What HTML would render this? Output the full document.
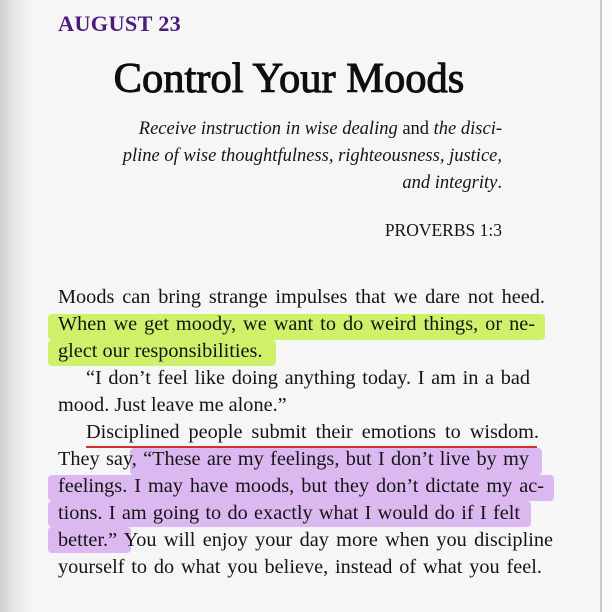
<!DOCTYPE html>
<html><head><meta charset="utf-8"><style>
html,body{margin:0;padding:0}
body{width:612px;height:612px;position:relative;overflow:hidden;background:#f6f6f6;font-family:"Liberation Serif",serif;color:#141414}
.shadow{position:absolute;left:0;top:0;width:34px;height:612px;background:linear-gradient(to right,#cfcfcf,#e6e6e6 40%,#f6f6f6)}
.redge{position:absolute;left:600px;top:0;width:2px;height:612px;background:#c8c8c8}
.rw{position:absolute;left:602px;top:0;width:10px;height:612px;background:#fbfbfb}
.a{position:absolute;white-space:nowrap}
.l{position:absolute;font-size:20.3px;line-height:27px;white-space:nowrap;height:27px}
.j{text-align:justify;text-align-last:justify}
.hl{position:absolute;border-radius:4px}
.g{background:#cff16a}
.p{background:#dcb8f0}
.ep{position:absolute;right:110px;font-style:italic;font-size:18.5px;text-align:right;white-space:nowrap}
</style></head><body>
<div class="shadow"></div><div class="redge"></div><div class="rw"></div>
<div class="a" style="left:58px;top:11px;font-size:22.3px;font-weight:bold;color:#4b1c7c;letter-spacing:0.3px">AUGUST 23</div>
<div class="a" style="left:0;width:578px;text-align:center;top:54px;font-size:42.5px;-webkit-text-stroke:1px #0e0e0e;color:#0e0e0e">Control Your Moods</div>
<div class="ep" style="top:119px">Receive instruction in wise dealing <span style="font-style:normal">and</span> the disci-</div>
<div class="ep" style="top:146px">pline of wise thoughtfulness, righteousness, justice,</div>
<div class="ep" style="top:173px">and integrity<span style="font-style:normal">.</span></div>
<div class="a" style="right:110px;top:220px;font-size:17.5px">PROVERBS 1:3</div>

<div class="hl g" style="left:48px;top:314px;width:497px;height:26px"></div>
<div class="hl g" style="left:48px;top:340px;width:228px;height:26px"></div>
<div class="hl p" style="left:130px;top:448px;width:412px;height:27px"></div>
<div class="hl p" style="left:48px;top:475px;width:506px;height:26px"></div>
<div class="hl p" style="left:48px;top:501px;width:483px;height:26px"></div>
<div class="hl p" style="left:48px;top:527px;width:83px;height:26px"></div>
<div style="position:absolute;left:86px;top:446px;width:451px;height:2px;background:#d03030"></div>

<div class="l j" style="left:58px;width:487px;top:284px">Moods can bring strange impulses that we dare not heed.</div>
<div class="l j" style="left:58px;width:477px;top:311px">When we get moody, we want to do weird things, or ne-</div>
<div class="l" style="left:58px;top:338px">glect our responsibilities.</div>
<div class="l j" style="left:86px;width:444px;top:365px">“I don’t feel like doing anything today. I am in a bad</div>
<div class="l" style="left:58px;top:392px">mood. Just leave me alone.”</div>
<div class="l j" style="left:86px;width:453px;top:419px">Disciplined people submit their emotions to wisdom.</div>
<div class="l j" style="left:58px;width:471px;top:446px">They say, “These are my feelings, but I don’t live by my</div>
<div class="l j" style="left:58px;width:486px;top:473px">feelings. I may have moods, but they don’t dictate my ac-</div>
<div class="l j" style="left:58px;width:462px;top:500px">tions. I am going to do exactly what I would do if I felt</div>
<div class="l j" style="left:58px;width:495px;top:527px">better.” You will enjoy your day more when you discipline</div>
<div class="l j" style="left:58px;width:484px;top:554px">yourself to do what you believe, instead of what you feel.</div>
</body></html>
